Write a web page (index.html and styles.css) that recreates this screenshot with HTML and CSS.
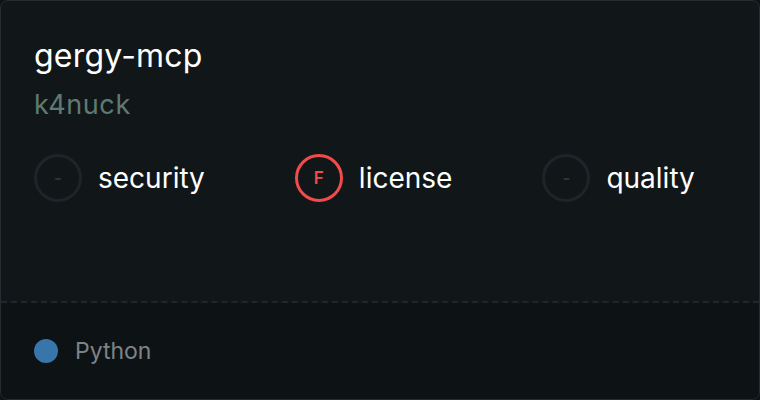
FILE: index.html
```html
<!DOCTYPE html>
<html lang="en">
<head>
    <meta charset="UTF-8">
    <title>gergy-mcp</title>
    <link rel="stylesheet" href="styles.css">
</head>
<body>
    <div class="card">
        <div class="card-main">
            <div class="repo-name">gergy-mcp</div>
            <div class="repo-owner">k4nuck</div>
            <div class="scores">
                <div class="score">
                    <span class="grade">-</span>
                    <span class="score-label">security</span>
                </div>
                <div class="score">
                    <span class="grade grade-f">F</span>
                    <span class="score-label">license</span>
                </div>
                <div class="score">
                    <span class="grade">-</span>
                    <span class="score-label">quality</span>
                </div>
            </div>
        </div>
        <!-- 言語 -->
        <div class="card-footer">
            <span class="lang-dot"></span>
            <span class="lang-name">Python</span>
        </div>
    </div>
</body>
</html>
```

FILE: styles.css
```css
html, body {
    margin: 0;
    background-color: #0e1316;
}
body {
    font-family: Inter, "Noto Sans", sans-serif;
    color: #ffffff;
}
.card {
    width: 760px;
    height: 400px;
    box-sizing: border-box;
    border: 1px solid #262c2f;
    border-radius: 8px;
    background-color: #111719;
    overflow: hidden;
    display: flex;
    flex-direction: column;
}
.card-main {
    height: 302px;
    box-sizing: border-box;
    padding: 33px 33px 0;
    border-bottom: 2px dashed #20272a;
}
.repo-name {
    font-size: 32px;
    line-height: 44px;
    letter-spacing: 0.2px;
}
.repo-owner {
    font-size: 27px;
    line-height: 36px;
    margin-top: 9px;
    letter-spacing: 0.6px;
    color: #5f7a72;
}
.scores {
    display: flex;
    gap: 90px;
    margin-top: 31px;
}
.score {
    display: flex;
    align-items: center;
    gap: 16px;
}
.grade {
    width: 48px;
    height: 48px;
    box-sizing: border-box;
    border: 3px solid #1e2427;
    border-radius: 50%;
    display: flex;
    align-items: center;
    justify-content: center;
    font-size: 17px;
    font-weight: 600;
    color: #2f3538;
}
.grade-f {
    border-color: #f24b4b;
    color: #f24b4b;
}
.score-label {
    font-size: 28px;
}
.card-footer {
    flex: 1;
    background-color: #0d1215;
    display: flex;
    align-items: center;
    padding-left: 33px;
    gap: 17px;
}
.lang-dot {
    width: 24px;
    height: 24px;
    border-radius: 50%;
    background-color: #3875aa;
}
.lang-name {
    font-size: 23px;
    color: #7e8386;
}
```
